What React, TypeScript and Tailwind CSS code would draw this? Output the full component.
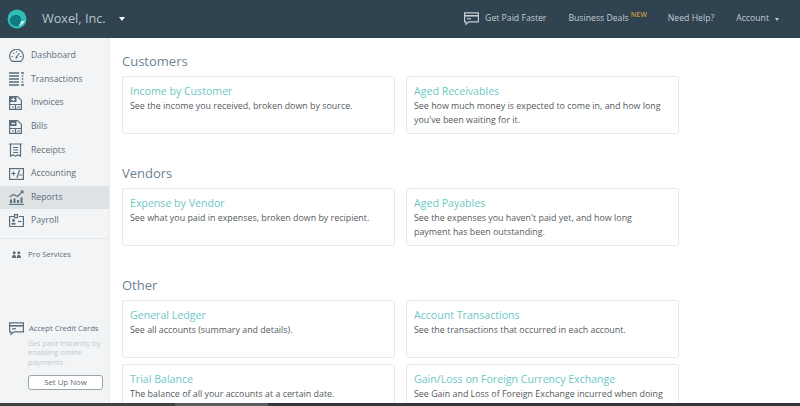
const sans = "font-['Open_Sans',sans-serif]";
const ink = "#5a6e7c";

function Dashboard() {
  return (
    <svg width="15" height="13" viewBox="0 0 15 13" fill="none" stroke={ink} strokeWidth="1.2">
      <path d="M3 12.4a6.900 6.900 0 1 1 9 0z" />
      <path d="M7.500 8l3-4M2.500 7.500h1.500M11 7.500h1.500M4.300 3.800l.9.900M7.500 2.200v1.300" />
      <circle cx="7.500" cy="8.500" r="1.100" fill={ink} stroke="none" />
    </svg>
  );
}

function Transactions() {
  return (
    <svg width="15" height="14" viewBox="0 0 15 14" fill="none" stroke={ink} strokeWidth="1.3">
      <path d="M0 1h10M0 4h10M0 7h10M0 10h10M0 13h10M12 1h3M12.800 4h1.500M12.800 7h1.500M12.800 10h1.500M12 13h3" />
    </svg>
  );
}

function Invoices({ minus }: { minus?: boolean }) {
  return (
    <svg width="13" height="14" viewBox="0 0 13 14" fill="none" stroke={ink} strokeWidth="1.200">
      <path d="M.6.600h8l3.800 3.800v9H.6z" />
      <rect x="1" y="1" width="6.500" height="5" fill={ink} stroke="none" />
      <path d={minus ? "M2.500 3.500h3.500" : "M2.500 3.500h3.500M4.250 1.800v3.400"} stroke="#f2f4f5" />
      <path d="M.6 8.500h11.800M6.500 8.500v5M3 11h2M8 11h3" />
    </svg>
  );
}

function Receipts() {
  return (
    <svg width="13" height="14" viewBox="0 0 13 14" fill="none" stroke={ink} strokeWidth="1.200">
      <path d="M0 1h13M1.500 1v12l2.500-1 2.500 1 2.500-1 2.500 1V1M4 4.500h5M4 7h5M4 9.500h5" />
    </svg>
  );
}

function Accounting() {
  return (
    <svg width="15" height="12" viewBox="0 0 15 12" fill="none" stroke={ink} strokeWidth="1.200">
      <rect x=".6" y=".6" width="13.800" height="10.800" />
      <path d="M2.500 5.500h4M4.500 3.500v4M10.500 2l-2.500 8M10.300 7h3" />
    </svg>
  );
}

function Reports() {
  return (
    <svg width="15" height="15" viewBox="0 0 15 15" fill="none" stroke={ink} strokeWidth="1.100">
      <path d="M0 14.400h15" />
      <path d="M2 13V9.500M5.500 13V8.500M9 13V10M12.500 13V7.500" strokeWidth="2" />
      <path d="M.5 7l4-2.500 4 2 4.500-4.500" />
      <path d="M11 .5h3.500V4z" fill={ink} stroke="none" />
    </svg>
  );
}

function Payroll() {
  return (
    <svg width="15" height="13" viewBox="0 0 15 13" fill="none" stroke={ink} strokeWidth="1.200">
      <path d="M5 2.500H.6v10h13.800v-10H10" />
      <path d="M5.500.6v3h3v-3z" />
      <circle cx="4.500" cy="6.500" r="1.400" fill={ink} stroke="none" />
      <path d="M2.500 9.800h4" strokeWidth="1.800" />
      <path d="M9 7.500h3.500" />
    </svg>
  );
}

function People() {
  return (
    <svg width="9" height="7" viewBox="0 0 9 7" fill={ink}>
      <circle cx="2.200" cy="1.700" r="1.500" />
      <circle cx="6.800" cy="1.700" r="1.500" />
      <path d="M0 7c0-4.200 4.200-4.200 4.200 0zM4.800 7c0-4.200 4.200-4.200 4.200 0z" />
    </svg>
  );
}

function Card({ stroke }: { stroke: string }) {
  return (
    <svg width="15" height="14" viewBox="0 0 15 14" fill="none" stroke={stroke} strokeWidth="1.200">
      <path d="M.6.800h13.800v9H5l-3 2.500V9.800H.6z" />
      <path d="M.6 3.800h13.800" strokeWidth="1.600" />
      <path d="M3 6.800h4" />
    </svg>
  );
}

const navItems = [
  { label: "Dashboard", icon: <Dashboard /> },
  { label: "Transactions", icon: <Transactions /> },
  { label: "Invoices", icon: <Invoices /> },
  { label: "Bills", icon: <Invoices minus /> },
  { label: "Receipts", icon: <Receipts /> },
  { label: "Accounting", icon: <Accounting /> },
  { label: "Reports", icon: <Reports />, active: true },
  { label: "Payroll", icon: <Payroll /> },
];

const sections = [
  {
    title: "Customers",
    reports: [
      { name: "Income by Customer", text: "See the income you received, broken down by source." },
      { name: "Aged Receivables", text: "See how much money is expected to come in, and how long you've been waiting for it." },
    ],
  },
  {
    title: "Vendors",
    reports: [
      { name: "Expense by Vendor", text: "See what you paid in expenses, broken down by recipient." },
      { name: "Aged Payables", text: "See the expenses you haven't paid yet, and how long payment has been outstanding." },
    ],
  },
  {
    title: "Other",
    reports: [
      { name: "General Ledger", text: "See all accounts (summary and details)." },
      { name: "Account Transactions", text: "See the transactions that occurred in each account." },
      { name: "Trial Balance", text: "The balance of all your accounts at a certain date." },
      { name: "Gain/Loss on Foreign Currency Exchange", text: "See Gain and Loss of Foreign Exchange incurred when doing business in another currency." },
    ],
  },
];

export default function App() {
  return (
    <div className={`${sans} relative flex h-[406px] w-[800px] flex-col overflow-hidden bg-white`}>
      {/* Top bar */}
      <header className="flex h-[38px] shrink-0 items-center bg-[#2f4350] pl-[7px] pr-[21px] text-[#c3ccd2]">
        <svg width="20" height="20" viewBox="0 0 20 20">
          <circle cx="10" cy="10" r="9.500" fill="#2fbdb4" />
          <path d="M2.500 11c1-3.500 4-5.500 7.500-5 3 .5 4.500 3 4 6-.3 2-1.200 3.500-2.500 5-4 1-8.500-1.500-9-6z" fill="#0f7a80" />
          <path d="M14 12c-.3 2-1.200 3.500-2.500 5 3-.5 5.500-2.500 6.500-5.500-1 .5-2.500.8-4 .5z" fill="#c9eeea" />
        </svg>
        <span className="ml-[15px] text-[12.700px] text-[#b9c4cb]">Woxel, Inc.</span>
        <span className="ml-[13px] h-0 w-0 border-x-[3.500px] border-t-[4px] border-x-transparent border-t-white" />
        <nav className="ml-auto flex items-center text-[8.700px]">
          <Card stroke="#c3ccd2" />
          <span className="ml-[6px]">Get Paid Faster</span>
          <span className="ml-[22px]">Business Deals</span>
          <span className="mb-[7px] ml-[2px] text-[7px] font-semibold text-[#c99a45]">NEW</span>
          <span className="ml-[21px]">Need Help?</span>
          <span className="ml-[22px]">Account</span>
          <span className="ml-[6px] h-0 w-0 border-x-[2.500px] border-t-[3px] border-x-transparent border-t-[#c3ccd2]" />
        </nav>
      </header>

      <div className="flex min-h-0 flex-1">
        {/* Sidebar */}
        <aside className="flex w-[110px] shrink-0 flex-col border-r border-[#e8ebed] bg-[#f2f4f5] pt-[6px] text-[#5d6d78]">
          {navItems.map((item) => (
            <div
              key={item.label}
              className={`flex h-[23.600px] items-center text-[8.700px] ${item.active ? "bg-[#dfe2e4]" : ""}`}
            >
              <span className="flex w-[31px] shrink-0 pl-[9px]">{item.icon}</span>
              <span>{item.label}</span>
            </div>
          ))}
          <div className="mt-[5px] border-t border-[#e4e7e9]" />
          <div className="mt-[10px] flex items-center text-[7.600px]">
            <span className="ml-[12px] mr-[7px]"><People /></span>
            Pro Services
          </div>
          <div className="mt-auto pb-[12px] pl-[9px]">
            <div className="flex items-center text-[7.600px]">
              <Card stroke={ink} />
              <span className="ml-[5px]">Accept Credit Cards</span>
            </div>
            <p className="ml-[19px] mt-[3px] text-[7.600px] leading-[9.500px] text-[#c2c9cd]">
              Get paid instantly by enabling online payments.
            </p>
            <button className="ml-[19px] mt-[5px] h-[15px] w-[75px] rounded-[3px] border border-[#9aa5ab] bg-white text-[7.800px] text-[#5d6d78]">
              Set Up Now
            </button>
          </div>
        </aside>

        {/* Report groups */}
        <main className="min-w-0 flex-1 overflow-hidden pl-[12px] pt-[14px]">
          {sections.map((section) => (
            <section key={section.title} className="mb-[30px]">
              <h2 className="mb-[6px] text-[13px] leading-[18px] text-[#6c8292]">{section.title}</h2>
              <div className="grid w-[557px] grid-cols-[273px_273px] gap-x-[11px] gap-y-[6px]">
                {section.reports.map((report) => (
                  <div
                    key={report.name}
                    className="h-[58px] rounded-[3px] border border-[#e6e8ea] bg-white pl-[7px] pr-[12px] pt-[7px]"
                  >
                    <h3 className="text-[10.600px] leading-[15px] text-[#6cc8c4]">{report.name}</h3>
                    <p className="text-[8.900px] leading-[14px] text-[#555b60]">{report.text}</p>
                  </div>
                ))}
              </div>
            </section>
          ))}
        </main>
      </div>

      {/* Browser strip along the bottom edge */}
      <div className="flex h-[3px] shrink-0 bg-[#35373a]">
        <div className="w-[175px] bg-[#3f4143]" />
        <div className="w-[93px] bg-[#5a5c5e]" />
      </div>
    </div>
  );
}
